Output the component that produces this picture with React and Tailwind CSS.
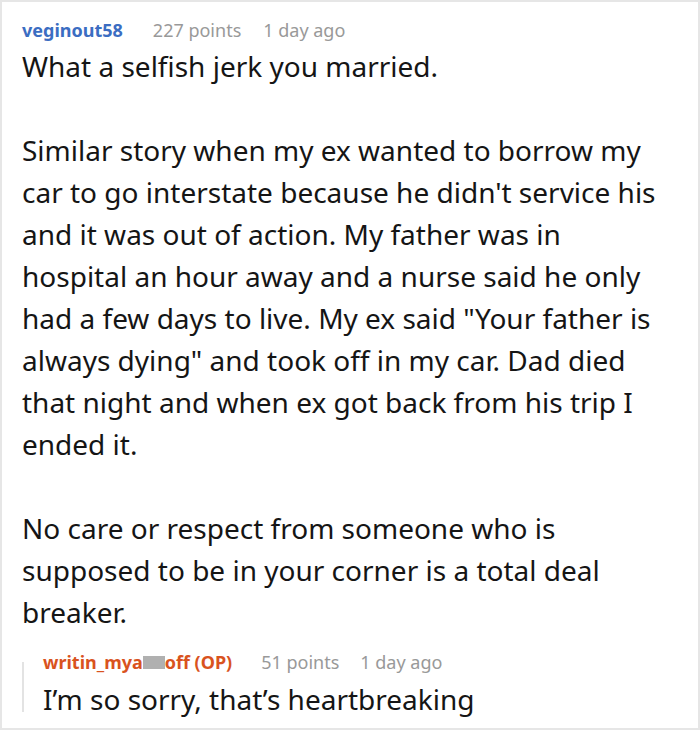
export default function App() {
  const paragraphs = [
    "What a selfish jerk you married.",
    "Similar story when my ex wanted to borrow my car to go interstate because he didn't service his and it was out of action. My father was in hospital an hour away and a nurse said he only had a few days to live. My ex said \"Your father is always dying\" and took off in my car. Dad died that night and when ex got back from his trip I ended it.",
    "No care or respect from someone who is supposed to be in your corner is a total deal breaker.",
  ];

  return (
    <div
      className="w-[700px] h-[730px] bg-white border-2 border-[#e6e6e6] overflow-hidden"
      style={{ fontFamily: '"Noto Sans", "Open Sans", sans-serif' }}
    >
      <div className="pl-[20px] pt-[16px] w-[654px]">
        {/* Comment header */}
        <div className="flex items-baseline text-[18px] leading-[24px]">
          <span className="font-bold text-[#3b6dc2] mr-[30px]">veginout58</span>
          <span className="text-[#999999] mr-[22px]">227 points</span>
          <span className="text-[#999999]">1 day ago</span>
        </div>

        {/* Comment body */}
        <div className="mt-[3px] text-[28px] leading-[42px] text-[#151515] flex flex-col gap-[42px]">
          {paragraphs.map((p, i) => (
            <p key={i}>{p}</p>
          ))}
        </div>

        {/* Reply */}
        <div className="mt-[17px] flex">
          <div className="w-[2px] bg-[#e3e3e3] mt-[12px] mb-[8px]" />
          <div className="pl-[19px]">
            <div className="flex items-baseline text-[18px] leading-[24px]">
              <span className="font-bold text-[#d9531e] mr-[29px]">
                writin_mya
                <span className="inline-block w-[22px] h-[13px] bg-[#b0b0b0] align-baseline" />
                off (OP)
              </span>
              <span className="text-[#999999] mr-[21px]">51 points</span>
              <span className="text-[#999999]">1 day ago</span>
            </div>
            <p className="mt-[4px] text-[28px] leading-[42px] text-[#151515]">
              I’m so sorry, that’s heartbreaking
            </p>
          </div>
        </div>
      </div>
    </div>
  );
}
